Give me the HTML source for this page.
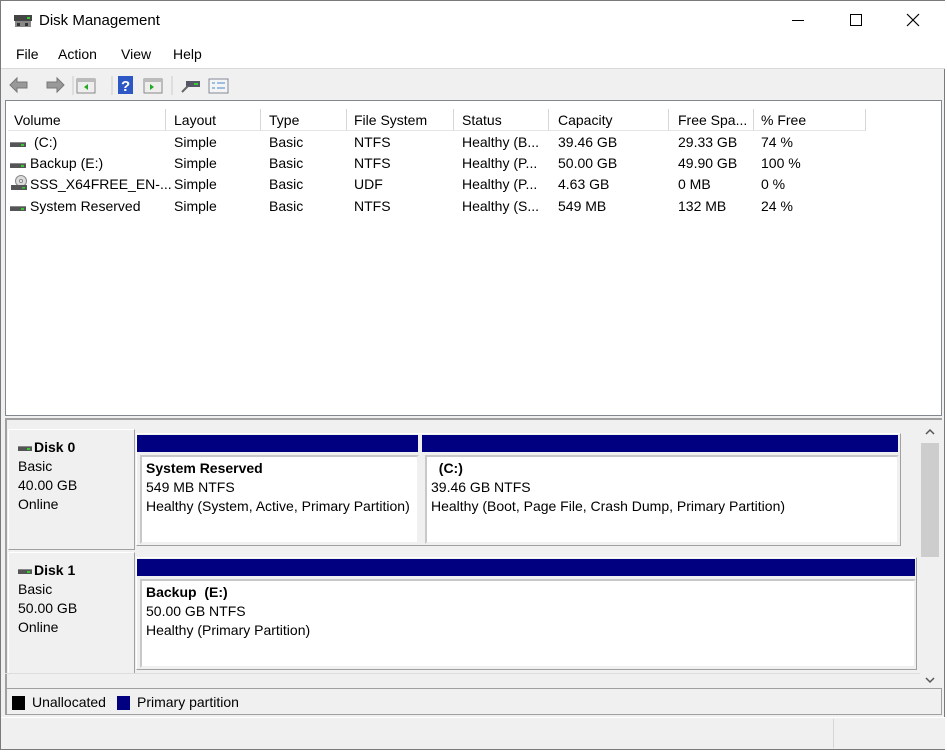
<!DOCTYPE html>
<html><head><meta charset="utf-8"><style>
*{margin:0;padding:0;box-sizing:border-box}
body{width:947px;height:754px;background:#fff;font-family:"Liberation Sans",sans-serif;font-size:14px;color:#000;position:relative;overflow:hidden}
.a{position:absolute;white-space:nowrap}
.win{position:absolute;left:0;top:0;width:945px;height:750px;border:1px solid #7a7a7a;background:#f0f0f0}
.hd{position:absolute;top:109px;height:22px;background:#fff;border-right:1px solid #d6d6d6;border-bottom:1px solid #e5e5e5;padding:3px 0 0 6px;font-size:14px;white-space:nowrap}
.row{position:absolute;left:8px;height:21px;font-size:14px;width:900px}
.row span{position:absolute;top:0;white-space:nowrap}
.drv{display:inline-block;width:16px;height:5px;background:#555;border-top:1px solid #888;position:relative;vertical-align:middle}
.drv:after{content:"";position:absolute;right:2px;top:1px;width:3px;height:2px;background:#3c3}
.lbl{position:absolute;background:#f0f0f0;border:1px solid #fff;border-right-color:#a0a0a0;border-bottom-color:#a0a0a0;padding:8px 0 0 9px;line-height:19px;font-size:14px;white-space:nowrap}
.bar{position:absolute;background:#000080}
.part{position:absolute;background:#fff;border:2px solid #c8c8c8;border-right-color:#f0f0f0;border-bottom-color:#f0f0f0;padding:2px 0 0 4px;line-height:19px;overflow:hidden;font-size:14px;white-space:nowrap}
</style></head><body>
<div class="win"></div>
<div class="a" style="left:1px;top:1px;width:944px;height:40px;background:#fff"></div>
<svg class="a" style="left:13px;top:13px" width="20" height="16"><rect x="1" y="2" width="18" height="6" fill="#444"/><rect x="14" y="4" width="3" height="2" fill="#3c3"/><rect x="2" y="8" width="16" height="6" fill="#888"/><rect x="4" y="10" width="3" height="3" fill="#333"/><rect x="12" y="10" width="3" height="3" fill="#333"/></svg>
<div class="a" style="left:39px;top:12px;font-size:15px">Disk Management</div>
<div class="a" style="left:792px;top:20px;width:12px;height:1px;background:#000"></div>
<div class="a" style="left:850px;top:14px;width:12px;height:12px;border:1px solid #000"></div>
<svg class="a" style="left:906px;top:13px" width="14" height="14"><path d="M1 1L13 13M13 1L1 13" stroke="#000" stroke-width="1.2"/></svg>
<div class="a" style="left:1px;top:41px;width:944px;height:28px;background:#fff;border-bottom:1px solid #d9d9d9"></div>
<div class="a" style="left:16px;top:46px;font-size:14px">File</div>
<div class="a" style="left:58px;top:46px">Action</div>
<div class="a" style="left:121px;top:46px">View</div>
<div class="a" style="left:173px;top:46px">Help</div>
<svg class="a" style="left:8px;top:75px" width="230" height="20">
<path d="M2 10L9 3V7H19V13H9V17Z" fill="#999" stroke="#777"/>
<path d="M56 10L49 3V7H39V13H49V17Z" fill="#999" stroke="#777"/>
<line x1="65" y1="1" x2="65" y2="20" stroke="#ccc"/>
<rect x="69" y="4" width="18" height="14" fill="#eee" stroke="#888"/><rect x="69" y="4" width="18" height="3" fill="#bbb"/><path d="M80 9l-4 3 4 3z" fill="#2a2"/>
<line x1="104" y1="1" x2="104" y2="20" stroke="#ccc"/>
<rect x="110" y="1" width="15" height="18" fill="#2d57c4"/><text x="113" y="16" fill="#fff" font-size="15" font-family="Liberation Sans" font-weight="bold">?</text>
<rect x="136" y="4" width="18" height="14" fill="#eee" stroke="#888"/><rect x="136" y="4" width="18" height="3" fill="#bbb"/><path d="M142 9l4 3-4 3z" fill="#2a2"/>
<line x1="164" y1="1" x2="164" y2="20" stroke="#ccc"/>
<rect x="178" y="6" width="14" height="6" fill="#556"/><rect x="186" y="8" width="4" height="2" fill="#3c3"/><path d="M174 17l6-6" stroke="#666" stroke-width="2"/>
<rect x="201" y="4" width="19" height="14" fill="#f4f4f4" stroke="#889"/><path d="M204 8h3M204 13h3M209 8h8M209 13h8" stroke="#48c"/>
</svg>
<div class="a" style="left:5px;top:100px;width:937px;height:316px;background:#fff;border:1px solid #828790"></div>
<div class="hd" style="left:8px;width:158px">Volume</div>
<div class="hd" style="left:166px;width:95px;padding-left:8px">Layout</div>
<div class="hd" style="left:261px;width:86px;padding-left:8px">Type</div>
<div class="hd" style="left:347px;width:107px;padding-left:7px">File System</div>
<div class="hd" style="left:454px;width:95px;padding-left:8px">Status</div>
<div class="hd" style="left:549px;width:120px;padding-left:9px">Capacity</div>
<div class="hd" style="left:669px;width:85px;padding-left:9px">Free Spa...</div>
<div class="hd" style="left:754px;width:112px;padding-left:7px">% Free</div>
<div class="row" style="top:134px"><span style="left:2px;top:1px"><i class="drv"></i></span><span style="left:26px">(C:)</span><span style="left:166px">Simple</span><span style="left:261px">Basic</span><span style="left:346px">NTFS</span><span style="left:454px">Healthy (B...</span><span style="left:550px">39.46 GB</span><span style="left:670px">29.33 GB</span><span style="left:753px">74 %</span></div>
<div class="row" style="top:155px"><span style="left:2px;top:1px"><i class="drv"></i></span><span style="left:22px">Backup (E:)</span><span style="left:166px">Simple</span><span style="left:261px">Basic</span><span style="left:346px">NTFS</span><span style="left:454px">Healthy (P...</span><span style="left:550px">50.00 GB</span><span style="left:670px">49.90 GB</span><span style="left:753px">100 %</span></div>
<div class="row" style="top:176px"><span style="left:2px;top:-2px"><svg width="18" height="18"><circle cx="11" cy="7" r="5.5" fill="#ddd" stroke="#888"/><circle cx="11" cy="7" r="1.5" fill="#fff" stroke="#888"/><rect x="1" y="11" width="16" height="5" fill="#555"/><rect x="12" y="13" width="3" height="1.5" fill="#3c3"/></svg></span><span style="left:22px">SSS_X64FREE_EN-...</span><span style="left:166px">Simple</span><span style="left:261px">Basic</span><span style="left:346px">UDF</span><span style="left:454px">Healthy (P...</span><span style="left:550px">4.63 GB</span><span style="left:670px">0 MB</span><span style="left:753px">0 %</span></div>
<div class="row" style="top:198px"><span style="left:2px;top:1px"><i class="drv"></i></span><span style="left:22px">System Reserved</span><span style="left:166px">Simple</span><span style="left:261px">Basic</span><span style="left:346px">NTFS</span><span style="left:454px">Healthy (S...</span><span style="left:550px">549 MB</span><span style="left:670px">132 MB</span><span style="left:753px">24 %</span></div>
<div class="a" style="left:5px;top:418px;width:937px;height:2px;background:#a0a0a0"></div>
<div class="a" style="left:5px;top:420px;width:937px;height:268px;background:#f0f0f0;border-left:2px solid #a0a0a0"></div>
<div class="lbl" style="left:8px;top:429px;width:127px;height:121px"><b style="font-size:14px"><i class="drv" style="width:14px;margin-right:2px"></i>Disk 0</b><br>Basic<br>40.00 GB<br>Online</div>
<div class="lbl" style="left:8px;top:552px;width:127px;height:122px"><b><i class="drv" style="width:14px;margin-right:2px"></i>Disk 1</b><br>Basic<br>50.00 GB<br>Online</div>
<div class="a" style="left:136px;top:433px;width:765px;height:113px;border:1px solid #fff;border-right-color:#a0a0a0;border-bottom-color:#a0a0a0"></div>
<div class="bar" style="left:137px;top:435px;width:281px;height:17px"></div>
<div class="bar" style="left:422px;top:435px;width:476px;height:17px"></div>
<div class="part" style="left:140px;top:455px;width:279px;height:89px"><b>System Reserved</b><br>549 MB NTFS<br>Healthy (System, Active, Primary Partition)</div>
<div class="part" style="left:425px;top:455px;width:474px;height:89px"><b>&nbsp;&nbsp;(C:)</b><br>39.46 GB NTFS<br>Healthy (Boot, Page File, Crash Dump, Primary Partition)</div>
<div class="a" style="left:136px;top:557px;width:781px;height:113px;border:1px solid #fff;border-right-color:#a0a0a0;border-bottom-color:#a0a0a0"></div>
<div class="bar" style="left:137px;top:559px;width:778px;height:17px"></div>
<div class="part" style="left:140px;top:579px;width:776px;height:89px"><b>Backup&nbsp; (E:)</b><br>50.00 GB NTFS<br>Healthy (Primary Partition)</div>
<div class="a" style="left:920px;top:422px;width:20px;height:266px;background:#f0f0f0"></div>
<div class="a" style="left:921px;top:443px;width:18px;height:114px;background:#cdcdcd"></div>
<svg class="a" style="left:924px;top:428px" width="12" height="8"><path d="M2 6L6 2L10 6" fill="none" stroke="#555" stroke-width="1.5"/></svg>
<svg class="a" style="left:924px;top:676px" width="12" height="8"><path d="M2 2L6 6L10 2" fill="none" stroke="#555" stroke-width="1.5"/></svg>
<div class="a" style="left:5px;top:673px;width:915px;height:1px;background:#ddd"></div>
<div class="a" style="left:5px;top:688px;width:937px;height:27px;background:#f0f0f0;border-top:1px solid #a0a0a0;border-bottom:1px solid #a0a0a0;border-left:2px solid #a0a0a0;border-right:1px solid #a0a0a0"></div>
<div class="a" style="left:12px;top:696px;width:13px;height:14px;background:#000"></div>
<div class="a" style="left:32px;top:694px;color:#000">Unallocated</div>
<div class="a" style="left:117px;top:696px;width:13px;height:14px;background:#000080"></div>
<div class="a" style="left:137px;top:694px">Primary partition</div>
<div class="a" style="left:1px;top:717px;width:944px;height:32px;background:#f0f0f0;border-top:1px solid #fff"></div>
<div class="a" style="left:833px;top:719px;width:1px;height:29px;background:#d6d6d6"></div>
</body></html>
